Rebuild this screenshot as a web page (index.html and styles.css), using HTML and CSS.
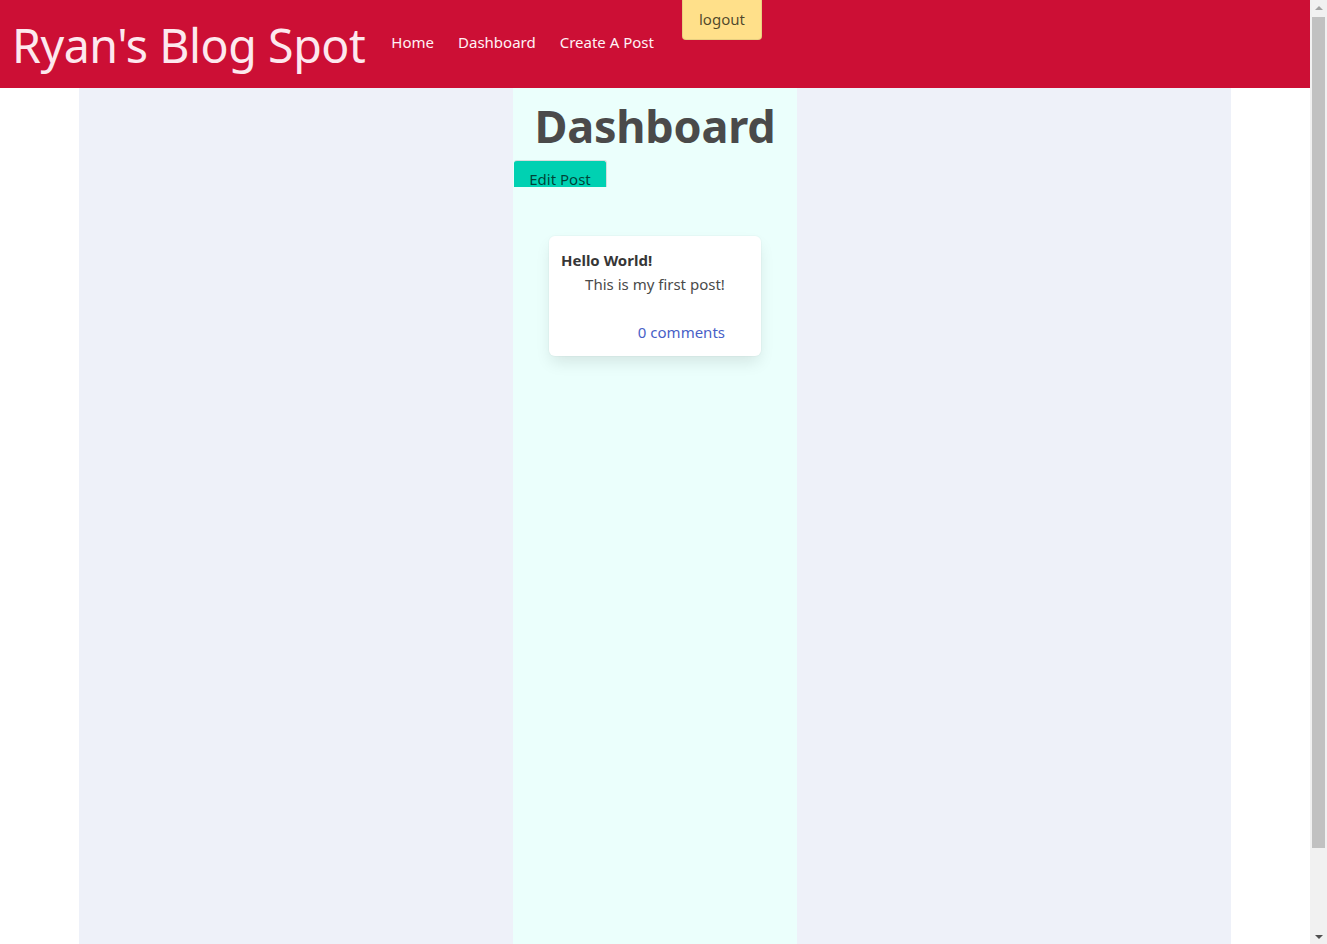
FILE: index.html
```html
<!DOCTYPE html>
<html lang="en">
<head>
<meta charset="utf-8">
<title>Ryan's Blog Spot</title>
<link rel="stylesheet" href="styles.css">
</head>
<body>
<div class="page">
  <header class="topbar">
    <h1 class="brand">Ryan's Blog Spot</h1>
    <nav class="nav">
      <a class="nav-link" href="#">Home</a>
      <a class="nav-link" href="#">Dashboard</a>
      <a class="nav-link" href="#">Create A Post</a>
    </nav>
    <button class="logout">logout</button>
  </header>
  <main class="container">
    <section class="column">
      <h1 class="page-title">Dashboard</h1>
      <div class="edit-wrap"><button class="edit-btn">Edit Post</button></div>
      <article class="card">
        <h2 class="card-title">Hello World!</h2>
        <p class="card-body">This is my first post!</p>
        <a class="card-link" href="#">0 comments</a>
      </article>
    </section>
  </main>
</div>
<div class="scrollbar" aria-hidden="true">
  <div class="arrow arrow-up"></div>
  <div class="thumb"></div>
  <div class="arrow arrow-down"></div>
</div>
</body>
</html>
```
FILE: styles.css
```css
html, body {
  margin: 0;
  padding: 0;
  background: #ffffff;
  font-family: "Noto Sans", "Open Sans", sans-serif;
  overflow: hidden;
}
.page {
  width: 1310px;
}
.topbar {
  display: flex;
  align-items: flex-start;
  height: 88px;
  background: #cc0f35;
  padding-left: 12px;
  box-sizing: border-box;
}
.brand {
  margin: 18px 0 0 0;
  font-weight: 400;
  font-size: 46.5px;
  line-height: 1.2;
  color: #fde8ee;
  letter-spacing: -0.45px;
}
.nav {
  display: flex;
  gap: 24px;
  margin: 30px 0 0 26px;
}
.nav-link {
  color: #fff2f5;
  text-decoration: none;
  font-size: 15px;
  line-height: 24px;
}
.logout {
  margin-left: 28px;
  width: 80px;
  height: 40px;
  border: 1px solid #e8cf80;
  border-top: none;
  border-radius: 0 0 4px 4px;
  background: #ffe08a;
  color: rgba(0,0,0,0.7);
  font-family: inherit;
  font-size: 15px;
  padding: 0 0 2px 0;
}
.container {
  width: 1152px;
  margin: 0 auto;
  background: #eef1f9;
  min-height: 969px;
  display: flex;
  justify-content: center;
}
.column {
  width: 284px;
  background: #ebfffc;
  display: flex;
  flex-direction: column;
}
.page-title {
  margin: 8px 0 0 0;
  text-align: center;
  font-size: 45px;
  line-height: 60px;
  font-weight: 700;
  color: #4a4a4a;
  letter-spacing: -0.2px;
}
.edit-wrap {
  margin: 4px 0 0 1px;
  width: 93px;
  height: 27px;
  overflow: hidden;
}
.edit-btn {
  width: 93px;
  height: 36px;
  border: 1px solid #d5dedd;
  border-bottom: none;
  border-left: none;
  border-radius: 3px 3px 0 0;
  background: #00d1b2;
  color: rgba(0,0,0,0.7);
  font-family: inherit;
  font-size: 15px;
  padding: 0;
  text-align: center;
  line-height: 20px;
  display: block;
  box-sizing: border-box;
}
.card {
  margin: 49px 0 0 36px;
  width: 212px;
  height: 120px;
  box-sizing: border-box;
  background: #ffffff;
  border-radius: 6px;
  box-shadow: 0 0.5em 1em -0.125em rgba(10,10,10,0.1), 0 0 0 1px rgba(10,10,10,0.02);
  padding: 13px 12px 0 12px;
  display: flex;
  flex-direction: column;
}
.card-title {
  margin: 0;
  font-size: 15px;
  font-weight: 700;
  line-height: 22px;
  color: #363636;
}
.card-body {
  margin: 2px 0 0 0;
  text-align: center;
  font-size: 15px;
  line-height: 22px;
  color: #4a4a4a;
}
.card-link {
  margin: 26px 24px 0 0;
  align-self: flex-end;
  font-size: 15px;
  line-height: 22px;
  color: #485fc7;
  text-decoration: none;
}
.scrollbar {
  position: fixed;
  top: 0;
  right: 0;
  width: 17px;
  height: 944px;
  background: #f1f1f1;
  display: flex;
  flex-direction: column;
  align-items: center;
}
.arrow {
  width: 0;
  height: 0;
  border-left: 4px solid transparent;
  border-right: 4px solid transparent;
  margin: 6px 0 5px;
}
.arrow-up {
  border-bottom: 4px solid #a3a3a3;
}
.arrow-down {
  border-top: 4px solid #505050;
  margin-top: auto;
}
.thumb {
  width: 13px;
  height: 831px;
  background: #c1c1c1;
  margin-top: 2px;
}
```
